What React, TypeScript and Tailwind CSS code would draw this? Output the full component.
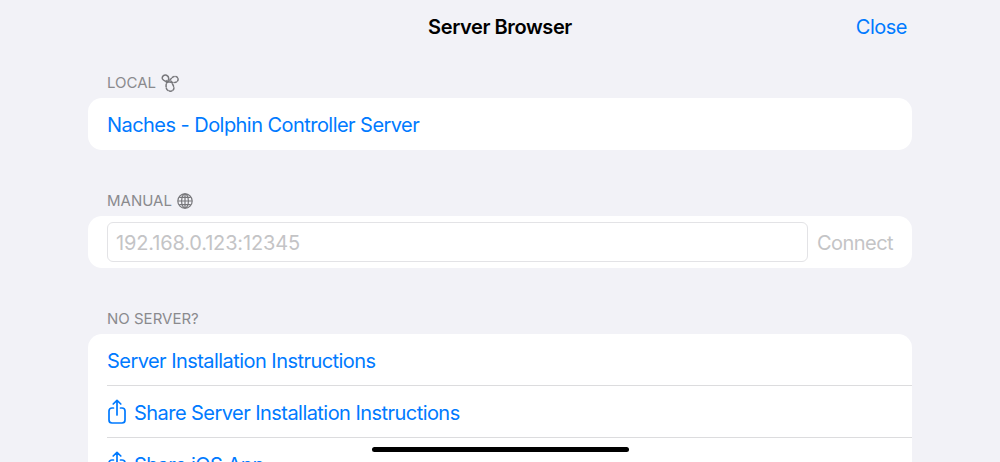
import type { ReactNode } from 'react'

function ShareIcon({ className }: { className?: string }) {
  return (
    <svg viewBox="0 0 18 25" fill="none" stroke="#007aff" strokeWidth="1.7" strokeLinecap="round" strokeLinejoin="round" className={className}>
      <path d="M5.5 9H4a3 3 0 0 0-3 3v9a3 3 0 0 0 3 3h10a3 3 0 0 0 3-3v-9a3 3 0 0 0-3-3h-1.5" />
      <path d="M9 16V1.5M5.2 5 9 1.3 12.8 5" />
    </svg>
  )
}

// three dotted lobes crossing in the middle
function BonjourIcon() {
  return (
    <svg viewBox="0 0 18 18" fill="none" stroke="#77777b" strokeWidth="1.5" strokeLinecap="round" className="w-[18px] h-[18px]">
      <path d="M12 8.500C8 8 3 8 1.500 5 .5 2.500 3 .5 5.500 1.200 7.500 2 8 4 7.500 6" />
      <path d="M6.500 8.500c2.500-2 4-5.500 7-6 2.500-.4 4 1.500 3.500 3.500-.5 2-2.500 2.800-4.500 2.200" strokeDasharray="2 1.500" />
      <path d="M6 6.500C5.200 9.500 4.800 12 5.300 14c.5 2.500 3 3.500 5.200 3 2.500-.8 2.800-3 2-5C11.800 10.500 11 9 10 7" strokeDasharray="2.500 1.500" />
    </svg>
  )
}

function GlobeIcon() {
  return (
    <svg viewBox="0 0 16 16" fill="none" stroke="#77777b" strokeWidth="1.2" className="w-4 h-4">
      <circle cx="8" cy="8" r="7.2" />
      <ellipse cx="8" cy="8" rx="3.4" ry="7.2" />
      <path d="M8 1v14M1 8h14M2.2 4.300h11.600M2.200 11.700h11.600" />
    </svg>
  )
}

function SectionHeader({ children }: { children: ReactNode }) {
  return (
    <div className="flex items-center gap-[5px] h-5 pl-[19px] text-[15px] text-[#8a8a8e] uppercase">
      {children}
    </div>
  )
}

export default function App() {
  return (
    <div className="font-['Inter',sans-serif] w-[1000px] h-[462px] overflow-hidden relative bg-[#f2f2f7]">
      {/* Nav bar */}
      <div className="flex items-center justify-center h-[54px] relative">
        <h1 className="text-[20px] font-semibold text-black tracking-[-0.4px]">Server Browser</h1>
        <button className="absolute right-[93px] top-[14px] text-[20px] leading-[26px] tracking-[-0.5px] text-[#007aff]">Close</button>
      </div>

      <div className="mx-[88px] pt-[19px] text-[20px] tracking-[-0.55px]">
        <div className="tracking-normal">
          <SectionHeader>
            <span>Local</span>
            <BonjourIcon />
          </SectionHeader>
        </div>
        <div className="mt-[5px] bg-white rounded-[14px] h-[52px] flex items-center pt-[2px] px-[19px] text-[#007aff]">
          Naches - Dolphin Controller Server
        </div>

        <div className="mt-[41px] tracking-normal">
          <SectionHeader>
            <span>Manual</span>
            <GlobeIcon />
          </SectionHeader>
        </div>
        <div className="mt-[5px] bg-white rounded-[14px] h-[52px] flex items-center px-[19px]">
          <div className="flex-1 h-10 border border-[#e3e3e6] rounded-[6px] flex items-center pt-[2px] px-2 text-[#c4c4c6] tracking-[-0.15px]">
            192.168.0.123:12345
          </div>
          <span className="ml-[9px] pt-[2px] text-[#c4c4c6]">Connect</span>
        </div>

        <div className="mt-[41px] tracking-normal">
          <SectionHeader>
            <span>No Server?</span>
          </SectionHeader>
        </div>
        <div className="mt-[5px] bg-white rounded-t-[14px] text-[#007aff]">
          <div className="h-[51px] flex items-center pt-[2px] pl-[19px]">Server Installation Instructions</div>
          <div className="h-px ml-[19px] bg-[#dcdcde]" />
          <div className="h-[51px] flex items-center pt-[2px] pl-[20px] gap-[8px]">
            <ShareIcon className="w-[18px] h-[25px] -mt-[3px]" />
            Share Server Installation Instructions
          </div>
          <div className="h-px ml-[19px] bg-[#dcdcde]" />
          <div className="h-[51px] flex items-center pt-[2px] pl-[20px] gap-[8px]">
            <ShareIcon className="w-[18px] h-[25px] -mt-[3px]" />
            Share iOS App
          </div>
        </div>
      </div>

      {/* Home indicator */}
      <div className="absolute left-[372px] top-[447px] w-[257px] h-[5px] rounded-full bg-black" />
    </div>
  )
}
